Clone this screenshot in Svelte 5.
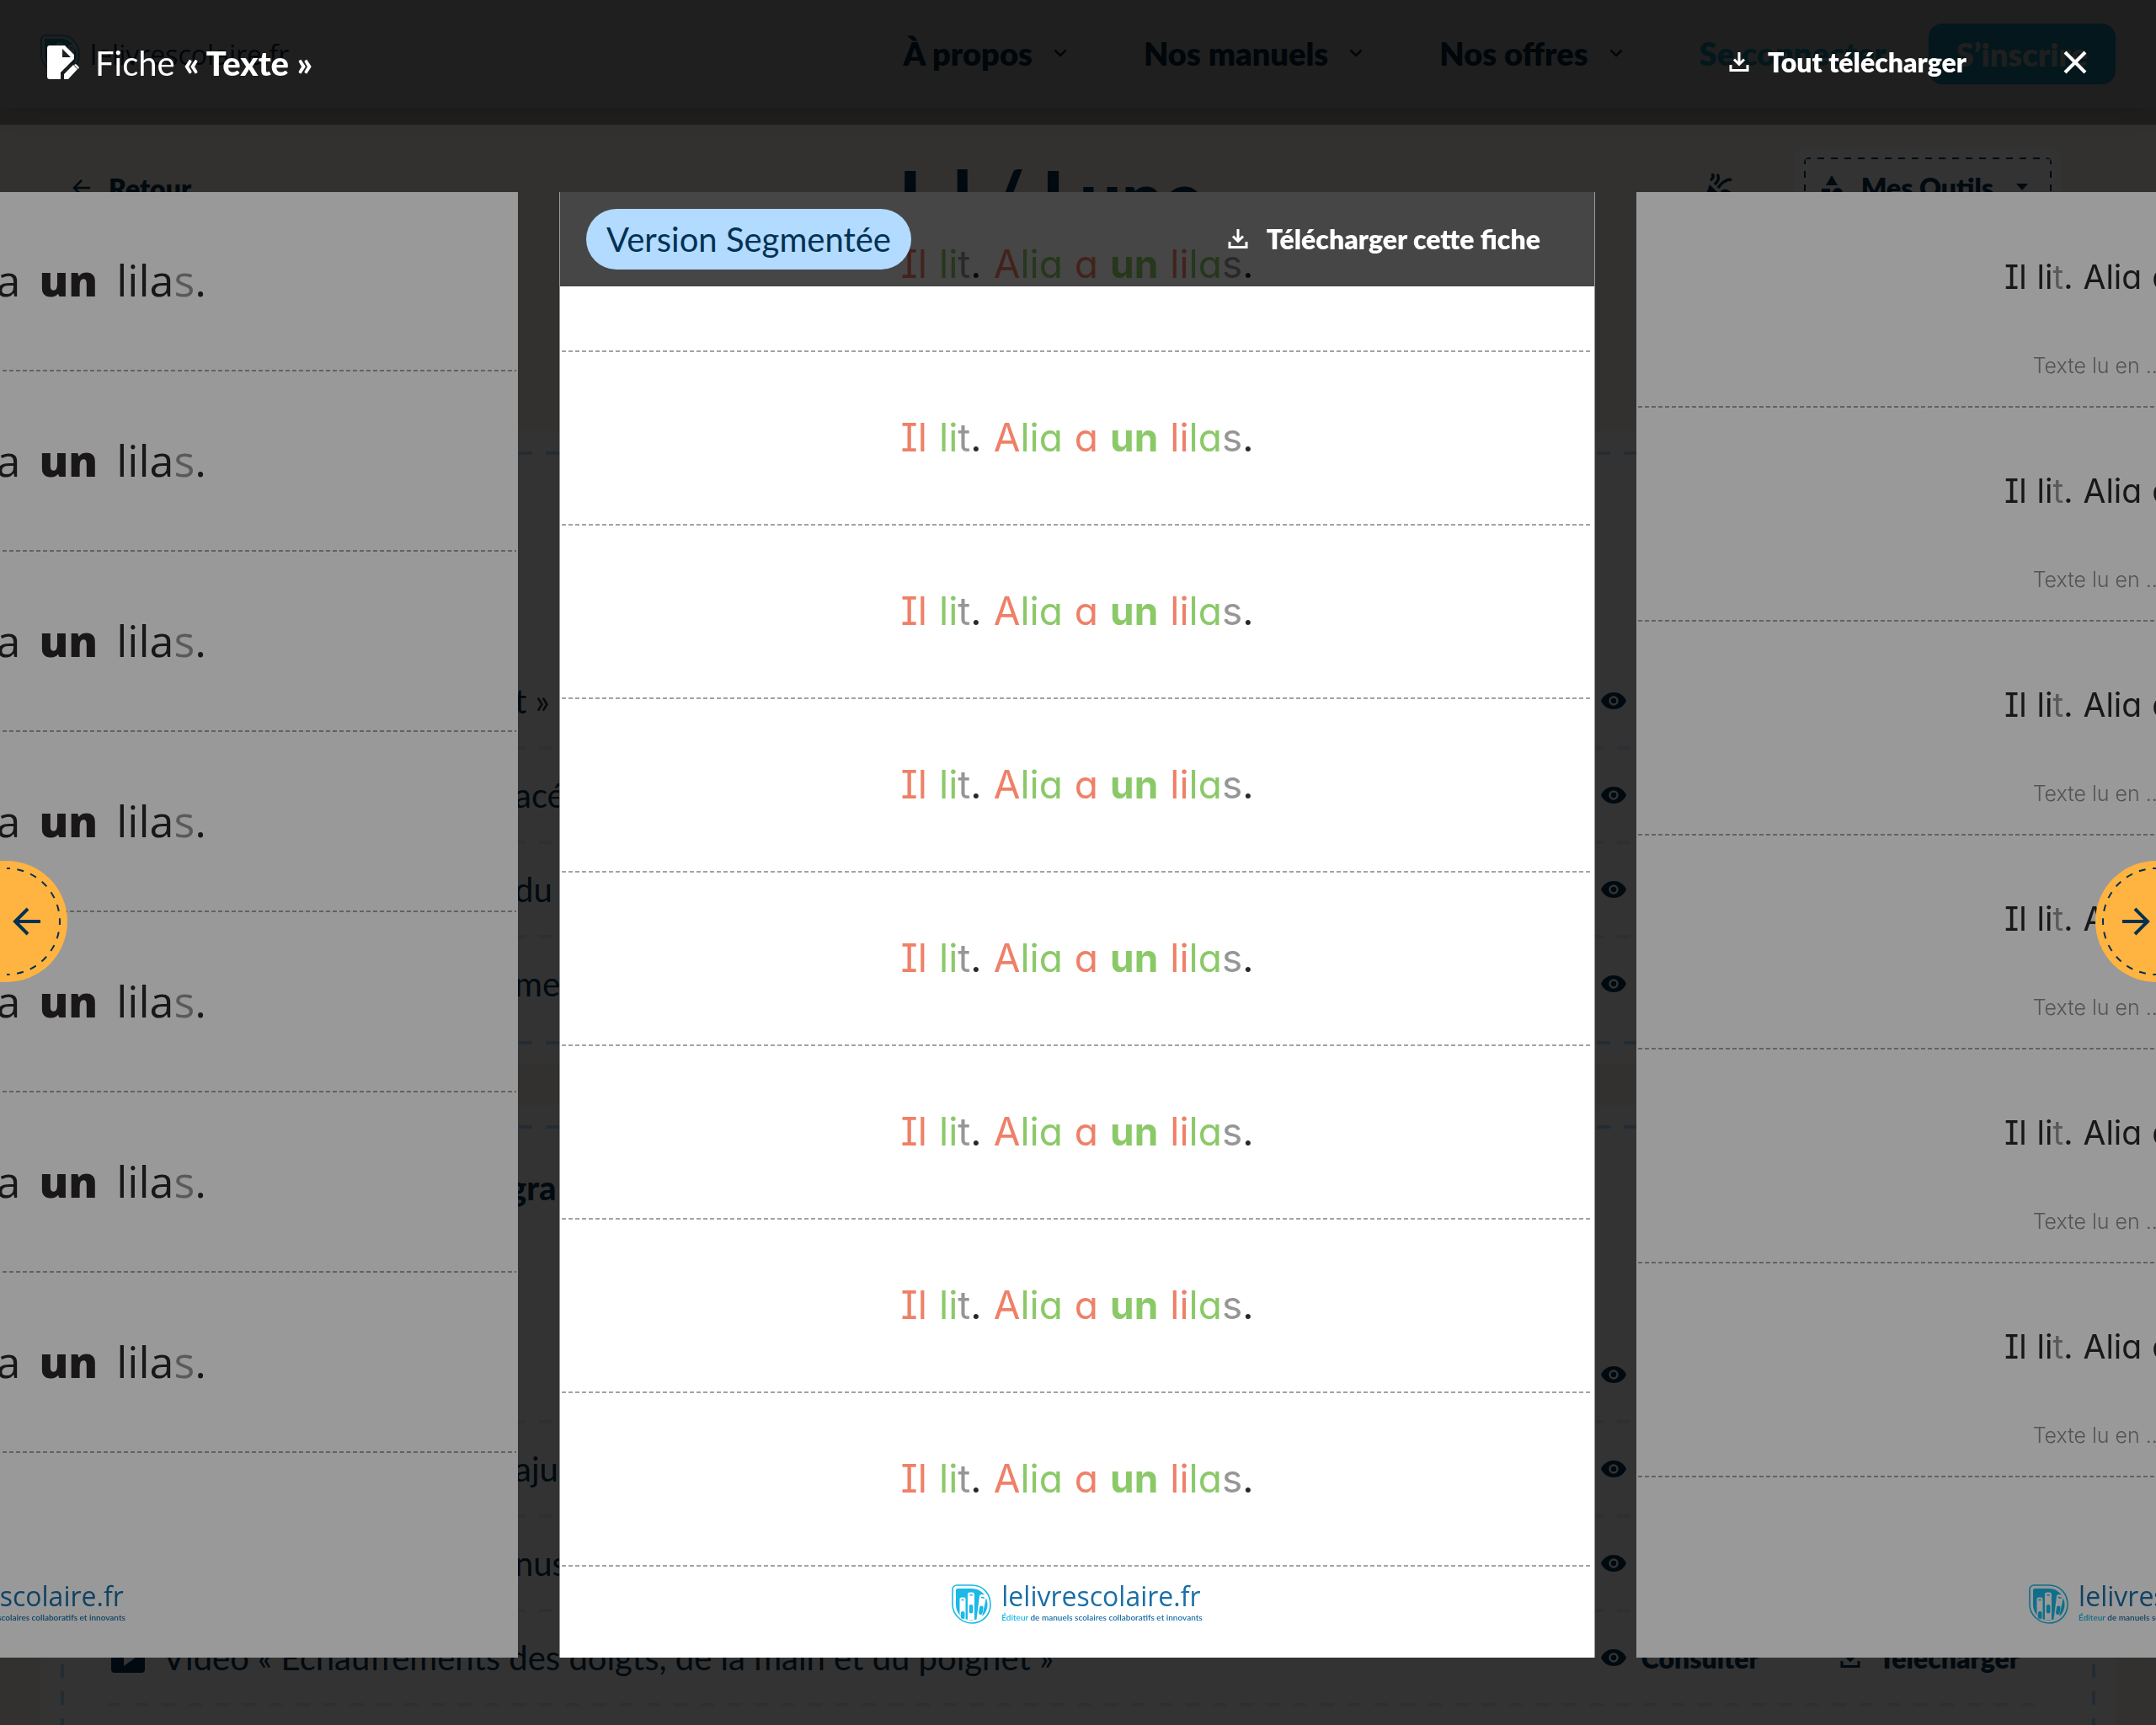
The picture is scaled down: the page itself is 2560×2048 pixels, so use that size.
<script lang="ts">
    type Piece = { text: string; tone: string };
    type Row = { name: string; cut?: boolean };

    const plain = ["ink", "ink", "ink", "ink"];
    const coloured = ["coral", "green", "coral", "green"];

    // The sentence, split in words and syllables; silent letters are always grey
    function sentence([a, b, c, d]: string[]): Piece[][] {
        return [
            [{ text: "Il", tone: a }],
            [{ text: "li", tone: b }, { text: "t", tone: "mute" }, { text: ".", tone: "ink" }],
            [{ text: "A", tone: c }, { text: "lia", tone: d }],
            [{ text: "a", tone: a }],
            [{ text: "un", tone: b + " strong" }],
            [{ text: "li", tone: c }, { text: "la", tone: d }, { text: "s", tone: "mute" }, { text: ".", tone: "ink" }],
        ];
    }

    const slides = [
        { kind: "large", rows: 7, words: sentence(plain), timed: false },
        { kind: "segmented", rows: 8, words: sentence(coloured), timed: false },
        { kind: "fluency", rows: 6, words: sentence(plain), timed: true },
    ];

    const menu = ["À propos", "Nos manuels", "Nos offres"];

    const sections: { title: string; rows: Row[] }[] = [
        {
            title: "",
            rows: [
                { name: "t »", cut: true },
                { name: "acé", cut: true },
                { name: "du", cut: true },
                { name: "me", cut: true },
            ],
        },
        {
            title: "gra",
            rows: [
                { name: "" },
                { name: "ajus", cut: true },
                { name: "nus", cut: true },
                { name: "Vidéo « Échauffements des doigts, de la main et du poignet »" },
                { name: "" },
            ],
        },
    ];
</script>

{#snippet download()}
    <svg class="download" viewBox="0 0 24 24" fill="none" stroke="currentColor" stroke-width="3">
        <path d="M12 1v14M6 9.500l6 6 6-6M2 16v6.500h20V16" />
    </svg>
{/snippet}

{#snippet shield()}
    <svg class="shield" viewBox="0 0 47 47">
        <path d="M6 1H24C37 1 46 11 46 24S36 46 24 46 1 36 1 24V6A5 5 0 0 1 6 1Z" fill="none" stroke="currentColor" stroke-width="1.600" />
        <path d="M7 5H24C35 5 42.500 14 42.500 24S35 42.500 24 42.500 5 35 5 24V7A2 2 0 0 1 7 5Z" fill="currentColor" />
        <g class="books">
            <path d="M9.500 36V17.500a2 2 0 0 1 2-2h3a2 2 0 0 1 2 2V41.500Z" />
            <path d="M19 42V12a2.500 2.500 0 0 1 2.500-2.500h3A2.500 2.500 0 0 1 27 12V42Z" />
            <path d="M29.500 42L33 14a2.500 2.500 0 0 1 3-2l3 .6a2.500 2.500 0 0 1 2 3L36 39Z" />
        </g>
        <path d="M11.500 18.500h3.200M21.300 12.700h3.600M35 15.500l3.800.8" stroke="currentColor" stroke-width="1.600" />
        <rect x="11" y="32" width="4.500" height="9" rx="2" fill="currentColor" />
        <rect x="20.800" y="24" width="4.600" height="10.500" rx="2.200" fill="currentColor" />
        <rect x="32.500" y="25.500" width="4.600" height="10.500" rx="2.200" transform="rotate(9 35 31)" fill="currentColor" />
    </svg>
{/snippet}

<div class="page">
    <header class="site-header">
        <a class="site-logo" href="/">{@render shield()}<span>lelivrescolaire.fr</span></a>
        <nav>
            {#each menu as item}
                <button class="menu-item">
                    {item}
                    <svg viewBox="0 0 16 10" fill="none" stroke="currentColor" stroke-width="2.500"><path d="M1.500 1.500L8 8l6.500-6.500" /></svg>
                </button>
            {/each}
            <a class="login" href="/connexion">Se connecter</a>
            <a class="signup" href="/inscription">S’inscrire</a>
        </nav>
    </header>

    <div class="lesson-bar">
        <a class="back" href="/manuel">
            <svg viewBox="0 0 22 22" fill="none" stroke="currentColor" stroke-width="2.500"><path d="M21 11H2M11 2L2 11l9 9" /></svg>
            Retour
        </a>
        <h1>L l / Lune</h1>
        <div class="tools">
            <svg class="party" viewBox="0 0 38 38">
                <path d="M1 37L10 13 25 28Z" fill="currentColor" />
                <path d="M11 8q5-3 2-8M16 13q7-7 3-12M20 17q6-8 9-8 3-3 7-1M24 22q5-4 12 3" fill="none" stroke="currentColor" stroke-width="3.500" />
            </svg>
            <button class="tool-menu">
                <span>
                    <svg class="shapes" viewBox="0 0 26 28" fill="currentColor"><path d="M13 0l7 12H6z" /><path d="M1 16h10v10H1z" /><circle cx="20" cy="21" r="6" /></svg>
                    Mes Outils
                    <svg class="caret" viewBox="0 0 14 8" fill="currentColor"><path d="M0 0h14L7 8z" /></svg>
                </span>
            </button>
        </div>
    </div>

    {#each sections as section}
        <section class="card">
            <div class="card-inner">
                <h2 class="cut">{section.title}</h2>
                <ul>
                    {#each section.rows as row}
                        <li>
                            <svg class="video" viewBox="0 0 40 36"><rect width="40" height="36" rx="4" fill="currentColor" /><path d="M15 8l14 10-14 10z" fill="#fff" /></svg>
                            <span class="name" class:cut={row.cut}>{row.name}</span>
                            <button class="see">
                                <svg viewBox="0 0 30 20">
                                    <path d="M0 10C3 3 9 0 15 0s12 3 15 10c-3 7-9 10-15 10S3 17 0 10Z" fill="currentColor" />
                                    <circle cx="15" cy="10" r="4.500" fill="none" stroke="#fff" stroke-width="2.500" />
                                </svg>
                                Consulter
                            </button>
                            <button class="get">{@render download()}Télécharger</button>
                        </li>
                    {/each}
                </ul>
            </div>
        </section>
    {/each}
</div>

<div class="overlay" role="dialog" aria-modal="true" aria-label="Fiche « Texte »">
    <header class="modal-header">
        <svg class="sheet" viewBox="0 0 38 40">
            <path d="M3 0h18l11 11v5L16 32v8H3a3 3 0 0 1-3-3V3a3 3 0 0 1 3-3Z" fill="#fff" />
            <path d="M18 4v10h10Z" fill="#1f1f1f" />
            <path d="M20 40v-6l11-11 5 5-11 12ZM32 23l2-1 4 4-1 2Z" fill="#fff" />
        </svg>
        <h2>Fiche <b>« Texte »</b></h2>
        <button class="action">{@render download()}Tout télécharger</button>
        <button class="close" aria-label="Fermer">
            <svg viewBox="0 0 28 28" stroke="currentColor" stroke-width="4"><path d="M2 2l24 24M26 2L2 26" /></svg>
        </button>
    </header>

    <div class="carousel">
        {#each slides as slide}
            <article class="slide {slide.kind}">
                {#each { length: slide.rows } as _}
                    <div class="strip">
                        <p class="sentence">
                            {#each slide.words as word}
                                <span>{#each word as piece}<span class={piece.tone}>{piece.text}</span>{/each}</span>
                            {/each}
                        </p>
                        {#if slide.timed}
                            <p class="timing">Texte lu en .............. sec.</p>
                        {/if}
                    </div>
                {/each}
                <footer>
                    {@render shield()}
                    <div>
                        <strong>lelivrescolaire.fr</strong>
                        <small><em>Éditeur</em> de manuels scolaires collaboratifs et innovants</small>
                    </div>
                </footer>
                {#if slide.kind === "segmented"}
                    <div class="slide-header">
                        <span class="version">Version Segmentée</span>
                        <button class="action">{@render download()}Télécharger cette fiche</button>
                    </div>
                {/if}
            </article>
        {/each}
    </div>

    <button class="arrow previous" aria-label="Fiche précédente">
        <svg viewBox="0 0 80 144" fill="none" stroke="#003252">
            <path d="M8 9a63 63 0 0 1 0 126" stroke-width="2" stroke-dasharray="8 8.490" stroke-dashoffset="4" />
            <path d="M48 72H19M33 57L18 72l15 15" stroke-width="4" />
        </svg>
    </button>
    <button class="arrow next" aria-label="Fiche suivante">
        <svg viewBox="0 0 72 144" fill="none" stroke="#003252">
            <path d="M72 9a63 63 0 0 0 0 126" stroke-width="2" stroke-dasharray="8 8.490" stroke-dashoffset="4" />
            <path d="M32 72h29M47 57l15 15-15 15" stroke-width="4" />
        </svg>
    </button>
</div>

<style>
    :global(body) {
        margin: 0;
        font-family: Lato, sans-serif;
        color: #003252;
    }

    h1, h2, p, ul {
        margin: 0;
        padding: 0;
    }

    button {
        border: none;
        background: none;
        padding: 0;
        font: inherit;
        color: inherit;
        cursor: pointer;
    }

    a {
        color: inherit;
        text-decoration: none;
    }

    svg {
        display: block;
        flex: none;
    }

    /* Page behind the viewer, scroll locked while it is open */
    .page {
        height: 100vh;
        overflow: hidden;
        background: #faf3eb;
    }

    .site-header {
        position: relative;
        display: flex;
        align-items: center;
        justify-content: space-between;
        height: 128px;
        padding: 0 48px;
        box-sizing: border-box;
        background: #fff;
        box-shadow: 0 8px 32px rgba(0, 50, 82, 0.1);
    }

    .site-logo {
        display: flex;
        align-items: center;
        gap: 12px;
        font-family: "Open Sans", sans-serif;
        font-size: 32px;
    }

    .site-logo .shield {
        color: #1ab9e0;
    }

    nav {
        display: flex;
        align-items: center;
        font-size: 38px;
        font-weight: 800;
    }

    .menu-item {
        display: flex;
        align-items: center;
        gap: 25px;
        margin-right: 91px;
        padding-bottom: 2px;
    }

    .menu-item svg {
        width: 16px;
    }

    .login {
        margin-right: 50px;
        padding-bottom: 2px;
        color: #1ab9e0;
    }

    .signup {
        padding: 0 33px;
        border-radius: 16px;
        background: #1ab9e0;
        color: #fff;
        line-height: 72px;
    }

    .lesson-bar {
        display: grid;
        grid-template-columns: 1fr auto 1fr;
        align-items: center;
        height: 98px;
        padding: 44px 112px 242px 86px;
        font-size: 32px;
        font-weight: 800;
    }

    .back {
        display: flex;
        align-items: center;
        gap: 21px;
        padding-bottom: 4px;
    }

    .back svg {
        width: 22px;
    }

    h1 {
        padding: 16px 38px 0 0;
        font-size: 88px;
        line-height: 90px;
        font-weight: 900;
    }

    .tools {
        display: flex;
        align-items: center;
        justify-content: flex-end;
        gap: 72px;
    }

    .party {
        width: 38px;
    }

    .tool-menu {
        padding: 12px;
        border-radius: 16px;
        background: #fff;
    }

    .tool-menu span {
        display: flex;
        align-items: center;
        gap: 22px;
        height: 70px;
        padding: 0 28px 6px 20px;
        border-radius: 6px;
        background:
            repeating-linear-gradient(90deg, #003252 0 8px, transparent 8px 16px) top / 100% 2px no-repeat,
            repeating-linear-gradient(90deg, #003252 0 8px, transparent 8px 16px) bottom / 100% 2px no-repeat,
            repeating-linear-gradient(#003252 0 8px, transparent 8px 16px) left / 2px 100% no-repeat,
            repeating-linear-gradient(#003252 0 8px, transparent 8px 16px) right / 2px 100% no-repeat;
    }

    .shapes {
        width: 26px;
    }

    .caret {
        width: 14px;
        margin-left: 5px;
    }

    .card {
        margin: 0 48px 48px;
        padding: 24px;
        background: #fff;
    }

    .card-inner {
        padding: 0 56px 14px;
        background:
            repeating-linear-gradient(90deg, #b3daff 0 16px, transparent 16px 32px) top / 100% 4px no-repeat,
            repeating-linear-gradient(90deg, #b3daff 0 16px, transparent 16px 32px) bottom / 100% 4px no-repeat,
            repeating-linear-gradient(#b3daff 0 16px, transparent 16px 32px) left / 4px 100% no-repeat,
            repeating-linear-gradient(#b3daff 0 16px, transparent 16px 32px) right / 4px 100% no-repeat;
    }

    .card h2 {
        height: 192px;
        padding-top: 50px;
        font-size: 40px;
        line-height: 48px;
        font-weight: 900;
    }

    ul {
        list-style: none;
    }

    li {
        display: flex;
        align-items: center;
        height: 108px;
        padding: 0 34px 4px 4px;
        font-size: 40px;
        background: repeating-linear-gradient(90deg, #dceeff 0 16px, transparent 16px 32px) bottom / 100% 4px no-repeat;
    }

    li:last-child {
        background: none;
    }

    .video {
        width: 40px;
    }

    .name {
        flex: 1;
        margin-left: 21px;
    }

    .name.cut {
        padding-left: 418px;
    }

    h2.cut {
        padding-left: 476px;
    }

    .see, .get {
        display: flex;
        align-items: center;
        font-size: 32px;
        font-weight: 800;
    }

    .see {
        gap: 18px;
        margin-right: 96px;
    }

    .see svg {
        width: 30px;
    }

    .get {
        gap: 22px;
    }

    /* Viewer */
    .overlay {
        position: fixed;
        inset: 0;
        display: flex;
        flex-direction: column;
        overflow: hidden;
        background: rgba(0, 0, 0, 0.8);
    }

    .modal-header {
        display: flex;
        align-items: center;
        height: 148px;
        padding: 0 82px 0 56px;
        background: rgba(0, 0, 0, 0.4);
        color: #fff;
    }

    .sheet {
        width: 38px;
    }

    .modal-header h2 {
        flex: 1;
        margin-left: 19px;
        padding-top: 2px;
        font-size: 40px;
        font-weight: 400;
    }

    .modal-header b {
        font-weight: 900;
    }

    .action {
        display: flex;
        align-items: center;
        gap: 22px;
        padding-bottom: 2px;
        font-size: 32px;
        font-weight: 800;
        color: #fff;
    }

    .download {
        width: 24px;
    }

    .close {
        margin-left: 115px;
    }

    .close svg {
        width: 28px;
    }

    .carousel {
        flex: 1;
        min-height: 0;
        display: flex;
        justify-content: center;
        gap: 49px;
        padding: 80px 2px 80px 0;
    }

    .slide {
        position: relative;
        flex: 0 0 calc(48% + 2px);
        display: flex;
        flex-direction: column;
        justify-content: flex-end;
        box-sizing: border-box;
        overflow: hidden;
        background: #fff;
    }

    .large::after, .fluency::after {
        content: "";
        position: absolute;
        inset: 0;
        background: rgba(0, 0, 0, 0.4);
    }

    .segmented {
        border: solid #999;
        border-width: 0 1px;
    }

    .strip {
        flex: none;
        display: flex;
        flex-direction: column;
        align-items: center;
        justify-content: center;
        box-sizing: border-box;
        background: repeating-linear-gradient(90deg, #a3a3a3 0 5px, transparent 5px 8px) bottom / calc(100% - 4px) 2px no-repeat;
        font-family: Inter, sans-serif;
        font-feature-settings: "cv08", "cv11";
    }

    .sentence {
        display: flex;
        white-space: nowrap;
    }

    .large .strip {
        height: 214px;
        padding-bottom: 6px;
        font-family: "Open Sans", sans-serif;
        font-size: 52px;
        font-weight: 500;
    }

    .large .sentence {
        gap: 22px;
    }

    .segmented .strip {
        height: 206px;
        padding-bottom: 4px;
        font-size: 46px;
    }

    .segmented .sentence {
        gap: 14px;
    }

    .fluency .strip {
        height: 254px;
        padding-top: 40px;
        font-size: 39px;
    }

    .fluency .sentence {
        gap: 12px;
    }

    .timing {
        margin-top: 66px;
        font-size: 25px;
        line-height: 32px;
        font-weight: 300;
        color: #8c8c8c;
    }

    .ink { color: #2a2728; }
    .mute { color: #969696; }
    .coral { color: #ef8067; }
    .green { color: #8bc968; }
    .strong { font-weight: 700; }

    .large .strong { font-weight: 800; }

    .slide footer {
        display: flex;
        align-items: flex-end;
        justify-content: center;
        gap: 12px;
        height: 214px;
        flex: none;
        padding-bottom: 40px;
        box-sizing: border-box;
        color: #1b6fa6;
        font-family: "Open Sans", sans-serif;
    }

    .large footer {
        height: 243px;
    }

    .segmented footer {
        height: 108px;
    }

    .shield {
        width: 47px;
        color: #1ab9e6;
    }

    .books {
        fill: #fff;
    }

    .slide footer strong, .slide footer small {
        display: block;
        font-weight: 400;
    }

    .slide footer strong {
        font-size: 32px;
        line-height: 34px;
    }

    .slide footer small {
        font-family: Lato, sans-serif;
        font-size: 10px;
        line-height: 16px;
        font-weight: 600;
    }

    .slide footer em {
        font-style: normal;
        color: #1ab9e6;
    }

    .slide-header {
        position: absolute;
        inset: 0 0 auto;
        display: flex;
        align-items: center;
        justify-content: space-between;
        height: 112px;
        padding: 0 64px 0 31px;
        background: rgba(0, 0, 0, 0.725);
    }

    .version {
        padding: 0 24px;
        border-radius: 36px;
        background: #b3daff;
        font-size: 40px;
        line-height: 72px;
    }

    .arrow {
        position: absolute;
        top: calc(50% + 70px);
        transform: translateY(-50%);
        background: #ffb340;
    }

    .previous {
        left: 0;
        width: 80px;
        height: 144px;
        border-radius: 0 72px 72px 0;
    }

    .next {
        right: 0;
        width: 72px;
        height: 144px;
        border-radius: 72px 0 0 72px;
    }
</style>
